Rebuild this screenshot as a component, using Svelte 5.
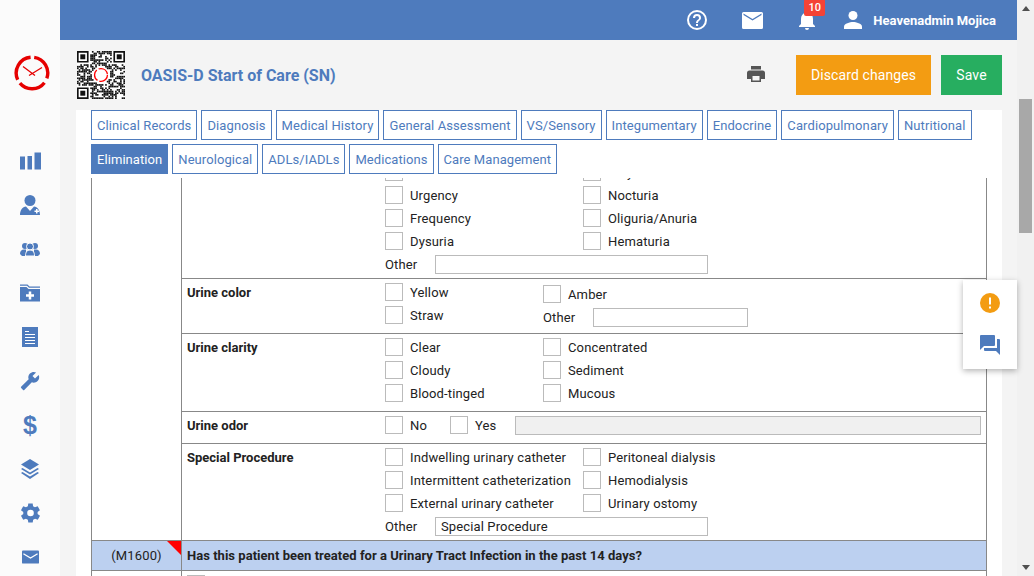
<script lang="ts">
	const tabsTop = ['Clinical Records', 'Diagnosis', 'Medical History', 'General Assessment', 'VS/Sensory', 'Integumentary', 'Endocrine', 'Cardiopulmonary', 'Nutritional'];
	const tabsBottom = ['Elimination', 'Neurological', 'ADLs/IADLs', 'Medications', 'Care Management'];

	// QR modules, seeded so the picture stays the same between runs
	const size = 29;
	const cells: { x: number; y: number }[] = [];
	let seed = 7;
	const next = () => {
		seed = (seed * 16807) % 2147483647;
		return seed / 2147483647;
	};
	const inFinder = (x: number, y: number) =>
		(x < 8 && y < 8) || (x > size - 9 && y < 8) || (x < 8 && y > size - 9);
	const inLogo = (x: number, y: number) => (x - 14) ** 2 + (y - 14) ** 2 < 30;
	for (let y = 0; y < size; y++) {
		for (let x = 0; x < size; x++) {
			if (inFinder(x, y) || inLogo(x, y)) continue;
			if (next() > 0.44) cells.push({ x, y });
		}
	}
	const finders = [
		[0, 0],
		[22, 0],
		[0, 22]
	];
</script>

{#snippet check(label: string)}
	<label class="opt"><span class="box"></span><span>{label}</span></label>
{/snippet}

<div class="page">
	<aside class="sidebar">
		<svg class="logo" viewBox="0 0 36 36" width="36" height="36">
			<g fill="none" stroke="#e60000" stroke-width="3.4">
				<path d="M3.700 24.700A15.800 15.800 0 0 1 16.600 2.300" />
				<path d="M20.200 2.350A15.800 15.800 0 0 1 32.800 23.400" />
				<path d="M30.450 27.700A15.800 15.800 0 0 1 5.900 28.200" />
			</g>
			<path d="M9 11.500l12 9M28 12.500l-13 8" stroke="#e60000" stroke-width="1.300" fill="none" />
		</svg>
		<nav class="nav">
			<svg viewBox="0 0 21 17" width="21" height="17"><path d="M0 4h5v13H0zM7.500 3.500h4.500V17H7.500zM14.500 0H21v17h-6.500z" /></svg>
			<svg viewBox="0 0 20 20" width="20" height="20"><circle cx="10" cy="5.500" r="5.500" /><path d="M0 20c0-5 2.500-8 6-8.500l4 4.500 4-4.500c3.500.5 6 3.500 6 8.500z" /><path d="M14.500 15.500h1.500V14h1.500v1.500H19V17h-1.500v1.500H16V17h-1.500z" fill="#fff" /></svg>
			<svg viewBox="0 0 20 14" width="20" height="14"><circle cx="5" cy="4" r="3" /><circle cx="15" cy="4" r="3" /><path d="M0 12c0-3 1.500-4.500 4-4.500h2V12l1 2H2zM20 12c0-3-1.500-4.500-4-4.500h-2V12l-1 2h5z" /><circle cx="10" cy="4.500" r="3.500" stroke="#fbfbfb" /><path d="M5.500 14c0-4 1.500-6 4.500-6s4.500 2 4.500 6z" stroke="#fbfbfb" /></svg>
			<svg viewBox="0 0 20 17" width="20" height="17"><path d="M0 0h7.500l2 2H20v1.200H9L7 1.200H0z" /><path d="M0 2.500h6.500l2 2H20V17H0z" /><path d="M8.750 7h2.500v2.750H14v2.500h-2.750V15h-2.500v-2.750H6v-2.500h2.750z" fill="#fff" /></svg>
			<svg viewBox="0 0 16 20" width="16" height="20"><path d="M0 0h16v20H0z" /><path d="M3 4h4v1H3zM3 7h10v1H3zM3 10h10v1H3zM3 13h10v1H3zM3 16h10v1H3z" fill="#fff" /></svg>
			<svg viewBox="0 0 24 24" width="20" height="20"><path transform="matrix(-1 0 0 1 24 0)" d="M22.700 19l-9.100-9.100c.9-2.300.4-5-1.500-6.900-2-2-5-2.400-7.400-1.300L9 6 6 9 1.600 4.700C.4 7.100.9 10.100 2.900 12.100c1.900 1.900 4.600 2.400 6.900 1.500l9.100 9.100c.4.4 1 .4 1.400 0l2.300-2.300c.5-.4.5-1.100.1-1.400z" /></svg>
			<span class="dollar">$</span>
			<svg viewBox="0 0 18 20" width="18" height="20"><path d="M9 0l9 5.500-9 5.500-9-5.500z" /><path d="M1.500 9L0 10l9 5.500 9-5.500-1.500-1L9 13.500zM1.500 13L0 14l9 6 9-6-1.500-1L9 17.500z" /></svg>
			<svg viewBox="2.500 2.500 19 19" width="21" height="21"><path d="M19.400 13a7.500 7.500 0 0 0 0-2l2.100-1.600-2-3.500-2.500 1a7.500 7.500 0 0 0-1.700-1L15 3.300h-4l-.4 2.600a7.500 7.500 0 0 0-1.700 1l-2.500-1-2 3.500L6.500 11a7.500 7.500 0 0 0 0 2l-2.100 1.600 2 3.500 2.500-1a7.500 7.500 0 0 0 1.700 1l.4 2.600h4l.4-2.600a7.500 7.500 0 0 0 1.700-1l2.500 1 2-3.500z" transform="translate(-1 0)" /><circle cx="12" cy="12" r="3" fill="#fff" /></svg>
			<svg viewBox="0 0 18 14" width="17" height="14"><path d="M1 0h16a1 1 0 0 1 1 1v12a1 1 0 0 1-1 1H1a1 1 0 0 1-1-1V1a1 1 0 0 1 1-1z" /><path d="M1.500 3.500L9 8l7.500-4.500" stroke="#fff" stroke-width="1.400" fill="none" /></svg>
		</nav>
	</aside>

	<div class="main">
		<header class="topbar">
			<svg class="help" viewBox="0 0 24 24" width="24" height="24" fill="#fff"><path d="M11 18h2v-2h-2zm1-16a10 10 0 1 0 0 20 10 10 0 0 0 0-20zm0 18a8 8 0 1 1 0-16 8 8 0 0 1 0 16zm0-14a4 4 0 0 0-4 4h2a2 2 0 1 1 4 0c0 2-3 1.750-3 5h2c0-2.250 3-2.500 3-5a4 4 0 0 0-4-4z" /></svg>
			<svg class="mail" viewBox="0 0 21 17" width="21" height="17" fill="#fff"><path d="M1.500 0h18A1.500 1.500 0 0 1 21 1.500v14a1.500 1.500 0 0 1-1.500 1.500h-18A1.500 1.500 0 0 1 0 15.500v-14A1.500 1.500 0 0 1 1.500 0zM1.500 3l9 5.500 9-5.500V1.500l-9 5.500-9-5.500z" fill-rule="evenodd" /></svg>
			<div class="bell">
				<svg viewBox="0 0 24 24" width="24" height="24" fill="#fff"><path d="M12 22a2 2 0 0 0 2-2h-4a2 2 0 0 0 2 2zm6-6v-5c0-3.100-1.600-5.600-4.500-6.300V4a1.500 1.500 0 0 0-3 0v.7C7.600 5.400 6 7.900 6 11v5l-2 2v1h16v-1z" /></svg>
				<span class="badge">10</span>
			</div>
			<svg class="user" viewBox="0 0 18 18" width="18" height="18" fill="#fff"><circle cx="9" cy="4.500" r="4.500" /><path d="M0 18v-2.500C0 12.500 6 11 9 11s9 1.500 9 4.500V18z" /></svg>
			<span class="username">Heavenadmin Mojica</span>
		</header>

		<section class="titlebar">
			<svg class="qr" viewBox="0 0 29 29" width="48" height="48">
				<rect width="29" height="29" fill="#fff" />
				{#each cells as c}
					<rect x={c.x} y={c.y} width="1" height="1" fill="#111" />
				{/each}
				{#each finders as f}
					<path d="M{f[0]} {f[1]}h7v7h-7zM{f[0] + 1} {f[1] + 1}v5h5v-5z" fill="#111" fill-rule="evenodd" />
					<rect x={f[0] + 2} y={f[1] + 2} width="3" height="3" fill="#111" />
				{/each}
				<circle cx="14.500" cy="14.500" r="3.900" fill="none" stroke="#f00" stroke-width="0.800" stroke-dasharray="7 1.200" />
			</svg>
			<h1>OASIS-D Start of Care (SN)</h1>
			<svg class="print" viewBox="0 0 18 16" width="18" height="16" fill="#555"><path d="M4 0h10v3.500H4zM2.500 4.500h13A2.500 2.500 0 0 1 18 7v6h-4v3H4v-3H0V7a2.500 2.500 0 0 1 2.500-2.500zM5.500 10v4.500h7V10z" fill-rule="evenodd" /></svg>
			<button class="btn discard">Discard changes</button>
			<button class="btn save">Save</button>
		</section>

		<section class="content">
			<div class="tabs">
				<div class="tab-row top">
					{#each tabsTop as t}<button class="tab">{t}</button>{/each}
				</div>
				<div class="tab-row">
					{#each tabsBottom as t, i}<button class="tab" class:active={i === 0}>{t}</button>{/each}
				</div>
			</div>

			<div class="form-clip">
				<div class="form">
					<div class="section">
						<div class="code"></div>
						<div class="rows">
							<div class="row">
								<div class="name"></div>
								<div class="cols">
									<div class="col wide">
										{@render check('Incontinence')}
										{@render check('Urgency')}
										{@render check('Frequency')}
										{@render check('Dysuria')}
									</div>
									<div class="col">
										{@render check('Polyuria')}
										{@render check('Nocturia')}
										{@render check('Oliguria/Anuria')}
										{@render check('Hematuria')}
									</div>
								</div>
								<div class="other"><span>Other</span><input class="field" /></div>
							</div>

							<div class="row">
								<div class="name">Urine color</div>
								<div class="cols">
									<div class="col narrow">
										{@render check('Yellow')}
										{@render check('Straw')}
									</div>
									<div class="col shifted">
										{@render check('Amber')}
										<div class="other inline"><span>Other</span><input class="field short" /></div>
									</div>
								</div>
							</div>

							<div class="row">
								<div class="name">Urine clarity</div>
								<div class="cols">
									<div class="col narrow">
										{@render check('Clear')}
										{@render check('Cloudy')}
										{@render check('Blood-tinged')}
									</div>
									<div class="col">
										{@render check('Concentrated')}
										{@render check('Sediment')}
										{@render check('Mucous')}
									</div>
								</div>
							</div>

							<div class="row">
								<div class="name">Urine odor</div>
								<div class="cols odor">
									<div class="no">{@render check('No')}</div>
									<div class="yes">{@render check('Yes')}</div>
									<input class="field disabled" disabled />
								</div>
							</div>

							<div class="row">
								<div class="name">Special Procedure</div>
								<div class="cols">
									<div class="col wide">
										{@render check('Indwelling urinary catheter')}
										{@render check('Intermittent catheterization')}
										{@render check('External urinary catheter')}
									</div>
									<div class="col">
										{@render check('Peritoneal dialysis')}
										{@render check('Hemodialysis')}
										{@render check('Urinary ostomy')}
									</div>
								</div>
								<div class="other"><span>Other</span><input class="field" value="Special Procedure" /></div>
							</div>
						</div>
					</div>

					<div class="section question">
						<div class="code flagged">(M1600)</div>
						<div class="ask">Has this patient been treated for a Urinary Tract Infection in the past 14 days?</div>
					</div>
					<div class="section">
						<div class="code"></div>
						<div class="answers"><span class="box"></span></div>
					</div>
				</div>
			</div>
		</section>

		<div class="float">
			<svg viewBox="0 0 20 20" width="20" height="20"><circle cx="10" cy="10" r="10" fill="#f39c12" /><path d="M9 4.500h2v7H9zM9 13.500h2v2H9z" fill="#fff" /></svg>
			<svg viewBox="0 0 20 20" width="20" height="20" fill="#4e7bbd"><path d="M0 1a1 1 0 0 1 1-1h13a1 1 0 0 1 1 1v9a1 1 0 0 1-1 1H4l-4 4z" /><path d="M17 4h2a1 1 0 0 1 1 1v15l-4-4H5a1 1 0 0 1-1-1v-2h13z" /></svg>
		</div>
	</div>

	<div class="scrollbar">
		<span class="arrow up"></span>
		<span class="thumb"></span>
		<span class="arrow down"></span>
	</div>
</div>

<style>
	:global(body) {
		margin: 0;
		font-family: Roboto, 'Liberation Sans', sans-serif;
		font-size: 13px;
		color: #222;
	}

	.page {
		display: flex;
		width: 1034px;
		height: 576px;
		overflow: hidden;
	}

	/* Sidebar */
	.sidebar {
		display: flex;
		flex-direction: column;
		align-items: center;
		width: 60px;
		height: 576px;
		overflow: hidden;
		flex-shrink: 0;
		background: #fbfbfb;
	}

	.logo {
		flex-shrink: 0;
		margin-top: 55px;
		margin-left: 3px;
	}

	.nav {
		display: flex;
		flex-direction: column;
		align-items: center;
		flex-shrink: 0;
		margin-top: 48px;
	}

	.nav svg {
		height: 44px;
		flex-shrink: 0;
		fill: #4e7bbd;
		overflow: visible;
	}

	.dollar {
		height: 44px;
		font-family: 'Liberation Sans', sans-serif;
		font-size: 25px;
		font-weight: 700;
		line-height: 44px;
		color: #4e7bbd;
	}

	/* Main column */
	.main {
		position: relative;
		display: flex;
		flex-direction: column;
		flex: 1;
		min-width: 0;
		background: #f4f4f4;
	}

	.topbar {
		display: flex;
		align-items: center;
		height: 40px;
		flex-shrink: 0;
		padding-right: 21px;
		justify-content: flex-end;
		background: #4e7bbd;
	}

	.mail {
		margin-left: 33px;
	}

	.bell {
		position: relative;
		display: flex;
		margin-left: 32px;
	}

	.badge {
		position: absolute;
		top: -9px;
		left: 9px;
		width: 21px;
		height: 17px;
		border-radius: 2px;
		background: #f44336;
		color: #fff;
		font-size: 11px;
		font-weight: 500;
		line-height: 17px;
		text-align: center;
	}

	.user {
		margin-left: 25px;
	}

	.username {
		margin-left: 11px;
		color: #fff;
		font-weight: 700;
	}

	.titlebar {
		display: flex;
		align-items: center;
		height: 70px;
		flex-shrink: 0;
		padding: 0 15px 0 17px;
	}

	h1 {
		margin: 0 0 0 16px;
		font-size: 16px;
		font-weight: 700;
		color: #4e7bbd;
	}

	.print {
		margin-left: auto;
		margin-right: 31px;
		margin-bottom: 2px;
	}

	.btn {
		height: 40px;
		border: 0;
		color: #fff;
		font: 14px Roboto, sans-serif;
		letter-spacing: 0.1px;
	}

	.discard {
		width: 135px;
		background: #f39c12;
	}

	.save {
		width: 61px;
		margin-left: 10px;
		background: #27ae60;
	}

	/* Form */
	.content {
		display: flex;
		flex-direction: column;
		flex: 1;
		min-height: 0;
		margin: 0 15px 0 16px;
		background: #fff;
	}

	.tabs {
		display: flex;
		flex-direction: column;
		gap: 4px;
		padding: 0 15px;
		flex-shrink: 0;
	}

	.tab-row {
		display: flex;
		gap: 4px;
	}

	.tab {
		height: 30px;
		padding: 0 5px;
		border: 1px solid #4e7bbd;
		background: #fff;
		color: #4e7bbd;
		font: 13px Roboto, sans-serif;
		letter-spacing: 0.07px;
	}

	.top .tab {
		letter-spacing: 0.1px;
	}

	.tab.active {
		background: #4e7bbd;
		color: #fff;
	}

	.form-clip {
		flex: 1;
		min-height: 0;
		margin-top: 4px;
		overflow: hidden;
	}

	.form {
		margin: -19px 15px 0;
		border-left: 1px solid #888;
		border-right: 1px solid #888;
	}

	.section {
		display: grid;
		grid-template-columns: 90px 1fr;
	}

	.code {
		border-right: 1px solid #888;
	}

	.row {
		padding: 4px 0 4px 203px;
		position: relative;
		border-bottom: 1px solid #888;
	}

	.row:last-child {
		border-bottom: 0;
	}

	.name {
		position: absolute;
		left: 5px;
		top: 6px;
		font-weight: 700;
		line-height: 15px;
	}

	.cols {
		display: flex;
	}

	.col {
		display: flex;
		flex-direction: column;
	}

	.wide {
		width: 198px;
	}

	.narrow {
		width: 158px;
	}

	.shifted {
		padding-top: 2px;
	}

	.opt {
		display: flex;
		align-items: flex-start;
		gap: 7px;
		height: 23px;
		line-height: 20px;
		letter-spacing: 0.13px;
		white-space: nowrap;
	}

	.box {
		display: block;
		width: 16px;
		height: 16px;
		flex-shrink: 0;
		border: 1px solid #bbb;
		background: #fff;
	}

	.other {
		display: flex;
		align-items: center;
		height: 19px;
		letter-spacing: 0.13px;
	}

	.other span {
		width: 50px;
	}

	.field {
		width: 273px;
		height: 19px;
		box-sizing: border-box;
		padding: 0 5px;
		border: 1px solid #bbb;
		background: #fff;
		font: 13px Roboto, sans-serif;
		letter-spacing: 0.13px;
		color: #222;
	}

	.field.short {
		width: 155px;
	}

	.odor {
		align-items: flex-start;
	}

	.no {
		width: 65px;
	}

	.yes {
		width: 65px;
	}

	.disabled {
		width: 466px;
		background: #f0f0f0;
	}

	.question {
		box-sizing: border-box;
		height: 31px;
		border-top: 1px solid #888;
		border-bottom: 1px solid #888;
		background: #bcd0f0;
		line-height: 29px;
	}

	.flagged {
		position: relative;
		text-align: center;
		letter-spacing: 0.13px;
	}

	.flagged::after {
		content: '';
		position: absolute;
		top: 0;
		right: 0;
		border-top: 14px solid #f00;
		border-left: 14px solid transparent;
	}

	.ask {
		padding-left: 5px;
		font-weight: 700;
		letter-spacing: 0.03px;
	}

	.answers {
		padding: 4px 5px;
	}

	/* Floating action panel */
	.float {
		position: absolute;
		top: 280px;
		right: 0;
		display: flex;
		flex-direction: column;
		align-items: center;
		gap: 22px;
		box-sizing: border-box;
		width: 54px;
		height: 89px;
		padding-top: 13px;
		background: #fff;
		box-shadow: 0 2px 6px rgba(0, 0, 0, 0.3);
	}

	/* Scrollbar */
	.scrollbar {
		display: flex;
		flex-direction: column;
		align-items: center;
		width: 17px;
		flex-shrink: 0;
		background: #f1f1f1;
	}

	.arrow {
		width: 0;
		height: 0;
		border-left: 4px solid transparent;
		border-right: 4px solid transparent;
	}

	.arrow.up {
		margin-top: 6px;
		border-bottom: 5px solid #505050;
	}

	.thumb {
		width: 13px;
		height: 134px;
		margin-top: 88px;
		background: #a8a8a8;
	}

	.arrow.down {
		margin-top: auto;
		margin-bottom: 6px;
		border-top: 5px solid #505050;
	}
</style>
